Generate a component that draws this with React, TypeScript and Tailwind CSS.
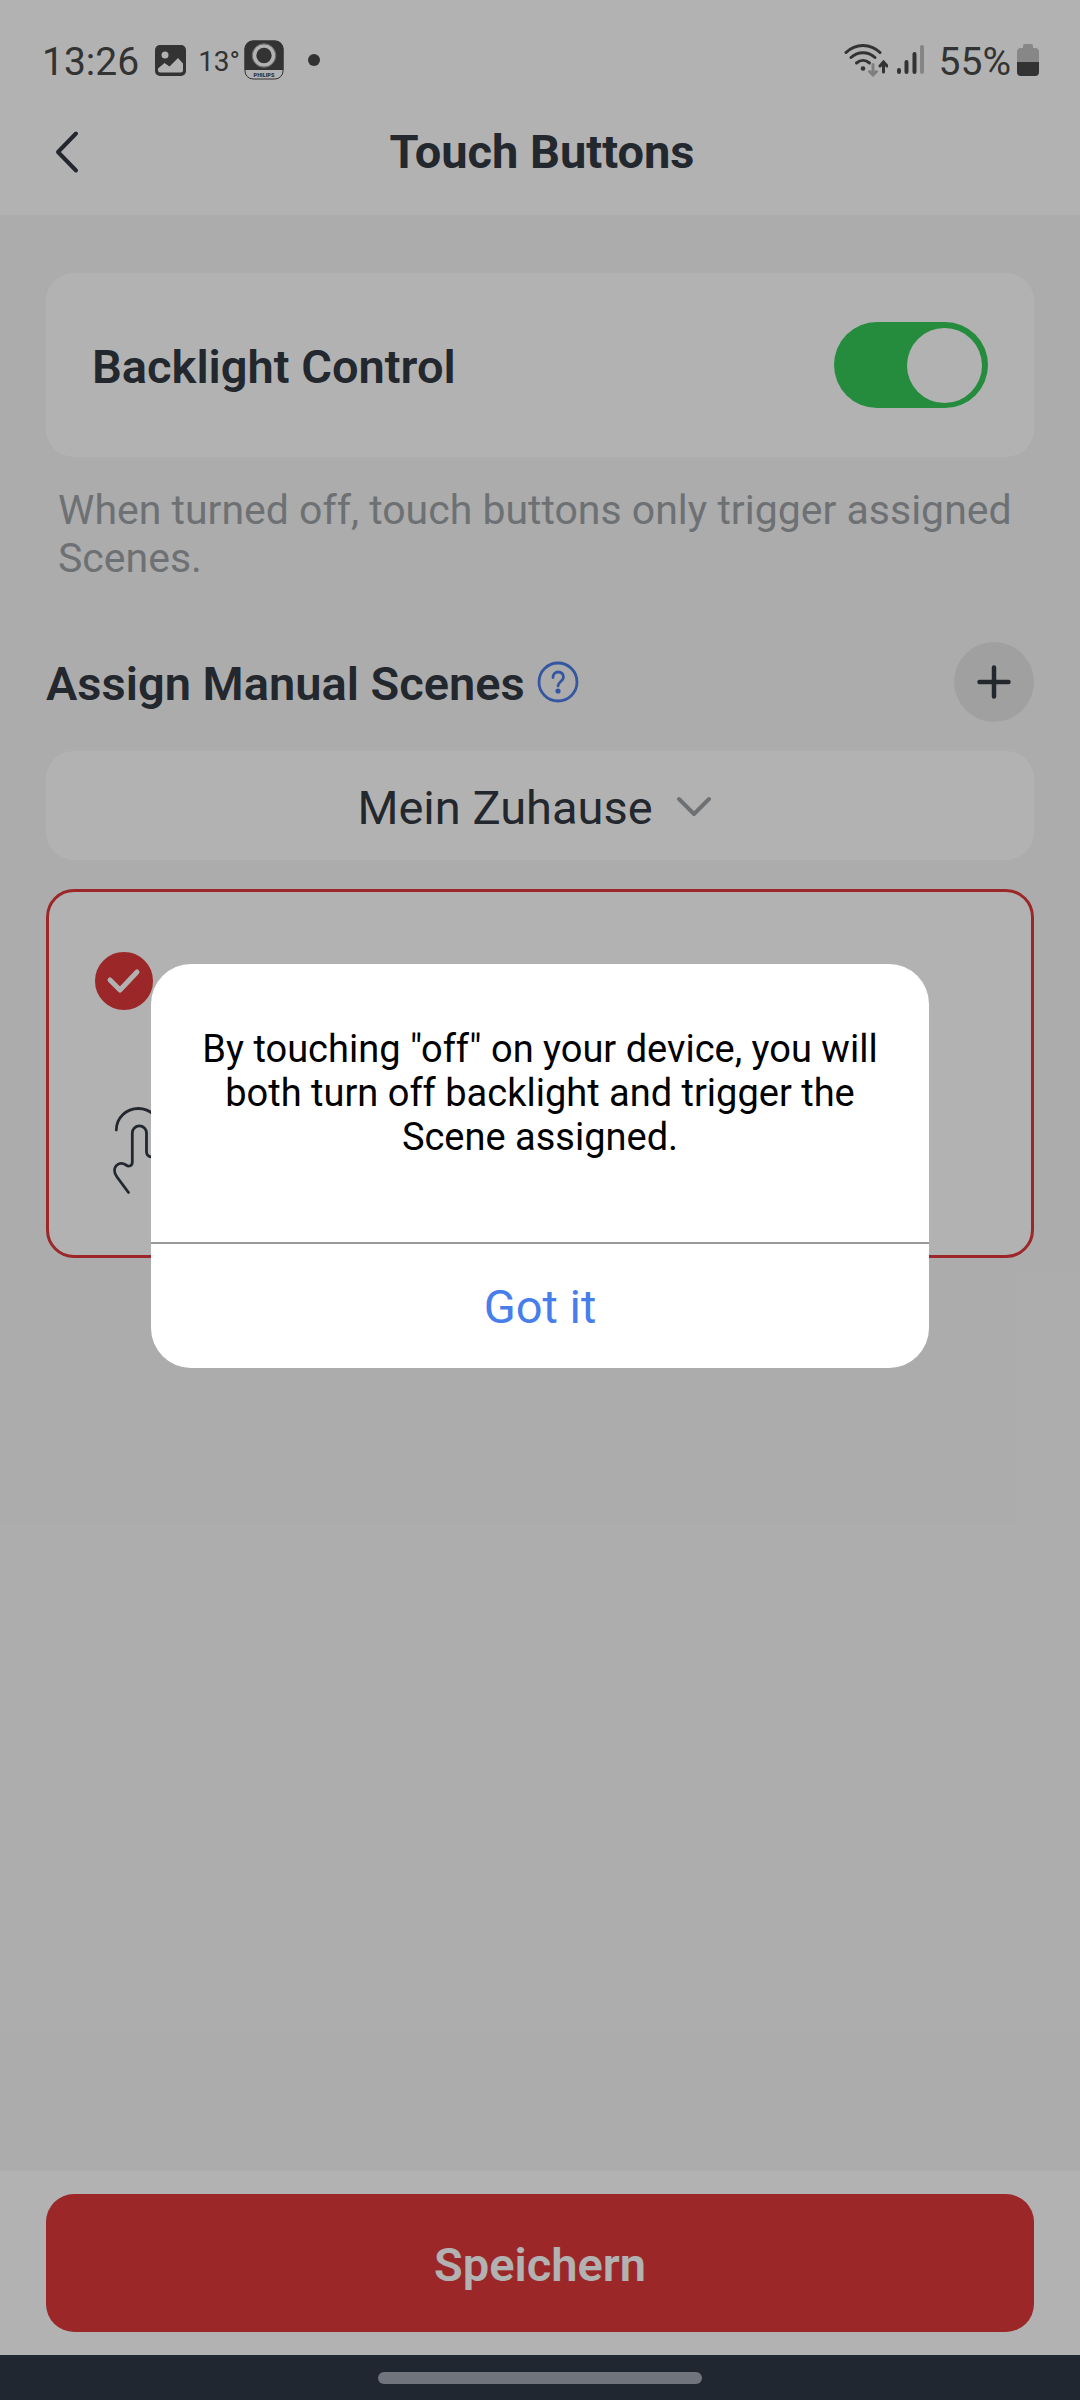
import { useState } from "react";

const StatusBar = () => {
  return (
    <div className="flex h-[88px] items-center justify-between pt-8 pl-[42px] pr-[41px] text-[39px] leading-[48px] text-[#494949]">
      <div className="flex items-center">
        <span className="pt-1">13:26</span>
        <svg className="ml-4 h-[31px] w-[31px]" viewBox="0 0 31 31">
          <rect width="31" height="31" rx="5" fill="#494949" />
          <circle cx="10" cy="10" r="3.5" fill="#fff" />
          <path
            d="M3 23.5 9.5 18l5 3.5L23 13l5 5.5V25a2.500 2.500 0 0 1-2.500 2.500h-20A2.500 2.500 0 0 1 3 25z"
            fill="#fff"
          />
        </svg>
        <span className="ml-3 pt-1 text-[28px]">13°</span>
        <svg className="ml-1 h-10 w-10" viewBox="0 0 40 40">
          <rect x="1" y="1" width="38" height="38" rx="8" fill="#fff" stroke="#494949" />
          <path d="M.5 30V9A8.500 8.500 0 0 1 9 .5h22A8.500 8.500 0 0 1 39.500 9v21z" fill="#494949" />
          <circle cx="20" cy="15.500" r="9.500" fill="#494949" stroke="#fff" strokeWidth="3.600" />
          <circle cx="20" cy="15.500" r="11.800" fill="none" stroke="#aaa" strokeWidth="1" />
          <text
            x="20"
            y="36.500"
            textAnchor="middle"
            fontSize="5.500"
            fontWeight="900"
            fill="#494949"
          >
            PHILIPS
          </text>
        </svg>
        <span className="ml-6 h-3 w-3 rounded-full bg-[#494949]" />
      </div>
      <div className="flex items-center">
        <svg className="h-9 w-11" viewBox="0 0 44 36" fill="none" strokeLinecap="round">
          <g stroke="#494949" strokeWidth="3">
            <path d="M2 10.500c9.500-9.500 24.500-9.500 34 0" />
            <path d="M7 15.500c7-6.500 17-6.500 24 0" />
            <path d="M12.500 21c4-3.500 9-3.500 13 0" />
            <path d="M39.500 30v-9.500M36 24l3.500-4 3.500 4" />
          </g>
          <circle cx="19" cy="26.500" r="2.300" fill="#494949" />
          <path d="M29 22.500v10M25.500 29.500l3.500 3.500 3.500-3.500" stroke="#b5b5b5" strokeWidth="3" />
        </svg>
        <svg
          className="ml-[9px] h-8 w-7"
          viewBox="0 0 28 32"
          stroke="#494949"
          strokeWidth="4"
          strokeLinecap="round"
        >
          <path d="M2 26v2M9.500 18v10M17.500 10v18" />
          <path d="M25 3v25" stroke="#bfbfbf" />
        </svg>
        <span className="ml-[14px] pt-1">55%</span>
        <svg className="ml-[6px] h-8 w-[22px]" viewBox="0 0 22 32">
          <path
            d="M6 4V2a2 2 0 0 1 2-2h6a2 2 0 0 1 2 2v2h2a4 4 0 0 1 4 4v10H0V8a4 4 0 0 1 4-4z"
            fill="#c2c2c2"
          />
          <path d="M0 18h22v10a4 4 0 0 1-4 4H4a4 4 0 0 1-4-4z" fill="#494949" />
        </svg>
      </div>
    </div>
  );
};

const Header = () => {
  return (
    <header className="relative flex h-[127px] items-center justify-center">
      <button type="button" aria-label="Back" className="absolute left-[42px] top-10">
        <svg
          className="h-12 w-12"
          viewBox="0 0 48 48"
          fill="none"
          stroke="#333843"
          strokeWidth="4"
          strokeLinecap="round"
          strokeLinejoin="round"
        >
          <path d="M34 5.500 16 24l18 18.500" />
        </svg>
      </button>
      <h1 className="pl-1 text-[47px] leading-[56px] font-bold">Touch Buttons</h1>
    </header>
  );
};

const SceneCard = () => {
  const [selected, setSelected] = useState(true);
  return (
    <div className="mt-[29px] h-[369px] rounded-[28px] border-3 border-[#df383b] bg-white px-[46px] pt-[60px]">
      <div className="relative h-[58px] w-[58px]">
        <input
          type="checkbox"
          aria-label="Scene"
          checked={selected}
          onChange={() => setSelected(!selected)}
          className="block h-full w-full appearance-none rounded-full border-3 border-[#df383b] checked:bg-[#df383b]"
        />
        <svg
          className="pointer-events-none absolute inset-0"
          viewBox="0 0 58 58"
          fill="none"
          stroke="#fff"
          strokeWidth="5"
          strokeLinecap="round"
          strokeLinejoin="round"
        >
          <path d="M15 28l10 10 17-18" />
        </svg>
      </div>
      <svg
        className="mt-[90px] h-[100px] w-[100px]"
        viewBox="0 0 100 100"
        fill="none"
        stroke="#333843"
        strokeWidth="2.800"
        strokeLinecap="round"
        strokeLinejoin="round"
      >
        <path d="M21.300 30a22 21.500 0 0 1 44 0" />
        <path d="M33.500 92.500 22 77c-3-4-3.500-9 0-12 3-2.500 6-2 9 0 3 2.200 6.300 1 6.300-3V33a7.100 7.100 0 0 1 14.200 0v19c0 3 1.500 4.300 4.500 5l17 4c6 1.500 9 5 8 11l-4 20.500" />
      </svg>
    </div>
  );
};

const InfoDialog = ({ onClose }: { onClose: () => void }) => {
  return (
    <div className="absolute inset-0 flex items-center justify-center bg-black/30 pb-[68px]">
      <div
        role="dialog"
        aria-modal="true"
        className="w-[72%] overflow-hidden rounded-[40px] bg-white text-center"
      >
        <p className="px-12 pt-[63px] pb-[83px] text-[38px] leading-[44px] text-black">
          By touching "off" on your device, you will both turn off backlight and trigger the Scene
          assigned.
        </p>
        <button
          type="button"
          onClick={onClose}
          className="h-[126px] w-full border-t-2 border-[#999] pt-0.5 text-[47px] leading-[56px] text-[#477eeb]"
        >
          Got it
        </button>
      </div>
    </div>
  );
};

const App = () => {
  const [backlight, setBacklight] = useState(true);
  const [open, setOpen] = useState(true);
  return (
    <div className="relative flex min-h-screen flex-col bg-[#f7f7f7] font-['Roboto',sans-serif] text-[#333843]">
      <div className="bg-white">
        <StatusBar />
        <Header />
      </div>

      <main className="flex-1 px-[46px] pt-[58px]">
        <div className="flex h-[184px] items-center justify-between rounded-[28px] bg-white px-[46px]">
          <label htmlFor="backlight" className="pt-1 text-[47px] leading-[56px] font-semibold">
            Backlight Control
          </label>
          <input
            id="backlight"
            type="checkbox"
            role="switch"
            checked={backlight}
            onChange={() => setBacklight(!backlight)}
            className="h-[86px] w-[154px] appearance-none rounded-full bg-gray-300 p-[6px] before:block before:h-[75px] before:w-[75px] before:rounded-full before:bg-white checked:bg-[#36c95a] checked:before:ml-auto"
          />
        </div>
        <p className="mt-[29px] px-3 text-[41px] leading-[48px] text-[#9da3a7]">
          When turned off, touch buttons only trigger assigned Scenes.
        </p>

        <div className="mt-[60px] flex h-20 items-center justify-between">
          <div className="flex items-center gap-3">
            <h2 className="pt-1 text-[47px] leading-[56px] font-semibold">Assign Manual Scenes</h2>
            <button type="button" aria-label="Help" onClick={() => setOpen(true)}>
              <svg
                className="h-[42px] w-[42px]"
                viewBox="0 0 42 42"
                fill="none"
                stroke="#4c7ce5"
                strokeWidth="2.800"
                strokeLinecap="round"
              >
                <circle cx="21" cy="21" r="19" />
                <path d="M16 16.500c0-3.500 2.200-5.500 5.200-5.500s5.300 2 5.300 5c0 4.200-5.500 4.700-5.500 9" />
                <circle cx="21" cy="30" r="1.200" fill="#4c7ce5" />
              </svg>
            </button>
          </div>
          <button
            type="button"
            aria-label="Add scene"
            className="flex h-20 w-20 items-center justify-center rounded-full bg-[#e6e6e6]"
          >
            <svg
              className="h-9 w-9"
              viewBox="0 0 36 36"
              stroke="#333843"
              strokeWidth="4.500"
              strokeLinecap="round"
            >
              <path d="M18 3.500v29M3.500 18h29" />
            </svg>
          </button>
        </div>

        <div className="mt-[29px] flex h-[109px] items-center justify-center rounded-[28px] bg-white">
          <select
            aria-label="Home"
            className="field-sizing-content appearance-none bg-transparent pt-1 text-[47px] leading-[56px]"
          >
            <option>Mein Zuhause</option>
          </select>
          <svg
            className="ml-[10px] h-[60px] w-[60px]"
            viewBox="0 0 60 60"
            fill="none"
            stroke="#9da3a7"
            strokeWidth="4"
            strokeLinecap="round"
            strokeLinejoin="round"
          >
            <path d="M16 23l15 15 15-15" />
          </svg>
        </div>

        <SceneCard />
      </main>

      <footer className="bg-white px-[46px] py-[23px]">
        <button
          type="button"
          className="h-[138px] w-full rounded-[28px] bg-[#df383b] pt-1 text-[47px] leading-[56px] font-semibold text-white"
        >
          Speichern
        </button>
      </footer>
      <div className="flex h-[45px] items-center justify-center bg-[#2f3846]">
        <div className="h-3 w-[30%] rounded-full bg-[#a0a6b3]" />
      </div>

      {open && <InfoDialog onClose={() => setOpen(false)} />}
    </div>
  );
};

export default App;
